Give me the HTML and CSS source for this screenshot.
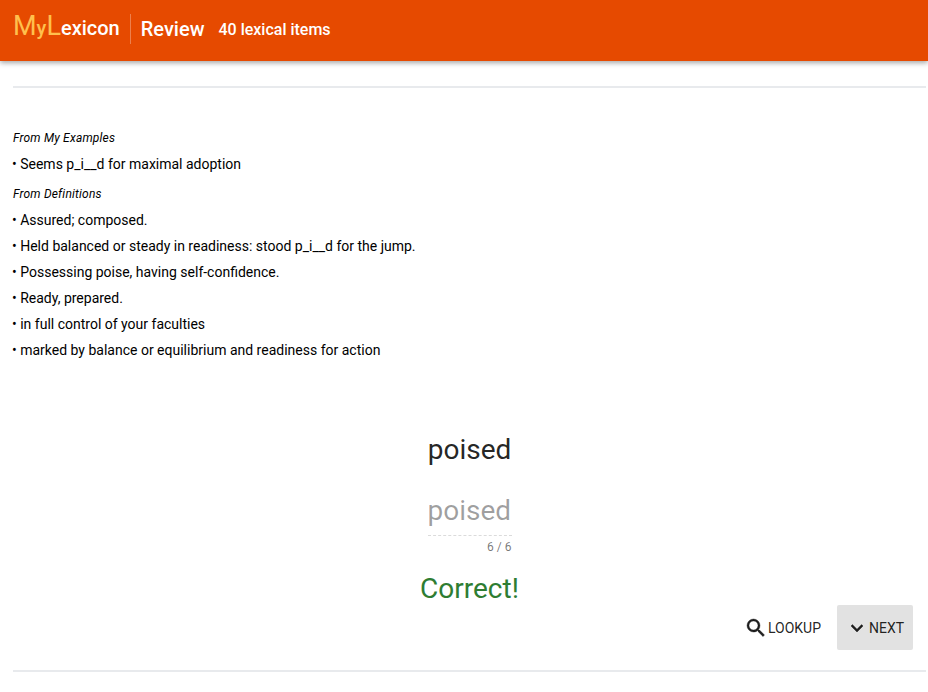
FILE: index.html
```html
<!DOCTYPE html>
<html lang="en">
<head>
    <meta charset="UTF-8">
    <meta name="viewport" content="width=device-width, initial-scale=1.0">
    <title>MyLexicon Review</title>
    <link rel="stylesheet" href="styles.css">
</head>
<body>
    <header class="toolbar">
        <div class="logo"><span class="logo-big">M</span><span class="logo-accent">y</span><span class="logo-big">L</span>exicon</div>
        <div class="toolbar-title">Review</div>
        <div class="toolbar-count">40 lexical items</div>
    </header>
    <main class="container">
        <hr class="divider">
        <section class="clues">
            <div class="clue-heading">From My Examples</div>
            <div class="clue">• Seems p_i__d for maximal adoption</div>
            <div class="clue-heading clue-heading-next">From Definitions</div>
            <div class="clue">• Assured; composed.</div>
            <div class="clue">• Held balanced or steady in readiness: stood p_i__d for the jump.</div>
            <div class="clue">• Possessing poise, having self-confidence.</div>
            <div class="clue">• Ready, prepared.</div>
            <div class="clue">• in full control of your faculties</div>
            <div class="clue">• marked by balance or equilibrium and readiness for action</div>
        </section>
        <section class="answer">
            <div class="word">poised</div>
            <div class="field">
                <div class="field-value">poised</div>
                <div class="field-counter">6 / 6</div>
            </div>
            <div class="result">Correct!</div>
        </section>
        <div class="actions">
            <button type="button" class="button">
                <svg class="icon" viewBox="0 0 24 24"><path d="M15.5 14h-.79l-.28-.27A6.47 6.47 0 0 0 16 9.5 6.5 6.5 0 1 0 9.5 16c1.61 0 3.09-.59 4.23-1.57l.27.28v.79l5 4.99L20.49 19l-4.99-5zm-6 0C7.01 14 5 11.99 5 9.5S7.01 5 9.5 5 14 7.01 14 9.5 11.99 14 9.5 14z"/></svg>
                Lookup
            </button>
            <button type="button" class="button button-active">
                <svg class="icon" viewBox="0 0 24 24"><path d="M7.41 8.59 12 13.17l4.59-4.58L18 10l-6 6-6-6z"/></svg>
                Next
            </button>
        </div>
        <hr class="divider">
    </main>
</body>
</html>
```
FILE: styles.css
```css
body {
    margin: 0;
    font-family: Roboto, "Liberation Sans", sans-serif;
    background-color: #fff;
    color: rgba(0, 0, 0, 0.87);
}
.toolbar {
    display: flex;
    align-items: center;
    box-sizing: border-box;
    height: 61px;
    padding: 0 13px 3px;
    background-color: #e64a00;
    color: #fff;
    box-shadow: 0 2px 5px rgba(0, 0, 0, 0.35);
}
.logo {
    display: flex;
    align-items: baseline;
    height: 30px;
    line-height: 24px;
    padding-right: 10px;
    border-right: 1px solid rgba(255, 255, 255, 0.3);
    font-size: 20px;
    font-weight: 500;
}
.logo-big {
    font-size: 27px;
    font-weight: 400;
    color: #ffc04d;
}
.logo-accent {
    color: #ffc04d;
}
.toolbar-title {
    margin-left: 10px;
    font-size: 20px;
    font-weight: 500;
}
.toolbar-count {
    margin-left: 14px;
    font-size: 16px;
    font-weight: 500;
}
.container {
    padding: 25px 2px 0 13px;
}
.divider {
    margin: 0;
    border: none;
    border-top: 2px solid #e8eaed;
}
.clues {
    padding-top: 37px;
    color: #000;
}
.clue-heading {
    height: 26px;
    line-height: 26px;
    font-size: 12px;
    font-style: italic;
    letter-spacing: 0.2px;
}
.clue-heading-next {
    margin-top: 4px;
}
.clue {
    height: 26px;
    line-height: 26px;
    font-size: 14px;
    margin-left: -1px;
}
.answer {
    display: flex;
    flex-direction: column;
    align-items: center;
    padding-top: 69px;
}
.word {
    font-size: 28px;
    line-height: 36px;
}
.field {
    width: 84px;
    margin-top: 25px;
}
.field-value {
    height: 42px;
    line-height: 36px;
    font-size: 28px;
    color: rgba(0, 0, 0, 0.38);
    border-bottom: 1px dashed rgba(0, 0, 0, 0.14);
}
.field-counter {
    margin-top: 4px;
    line-height: 14px;
    font-size: 12px;
    text-align: right;
    color: rgba(0, 0, 0, 0.54);
}
.result {
    margin-top: 19px;
    font-size: 28px;
    line-height: 32px;
    color: #2e7d32;
}
.actions {
    display: flex;
    justify-content: flex-end;
    gap: 8px;
    padding-right: 13px;
    margin-bottom: 20px;
}
.button {
    display: flex;
    align-items: center;
    height: 45px;
    padding: 0 8px;
    border: none;
    border-radius: 2px;
    background: none;
    color: rgba(0, 0, 0, 0.87);
    font-family: inherit;
    font-size: 14px;
    text-transform: uppercase;
    cursor: pointer;
}
.button-active {
    width: 76px;
    background-color: #e2e2e2;
}
.icon {
    width: 24px;
    height: 24px;
    fill: currentColor;
    stroke: currentColor;
    stroke-width: 0.4;
}
```
